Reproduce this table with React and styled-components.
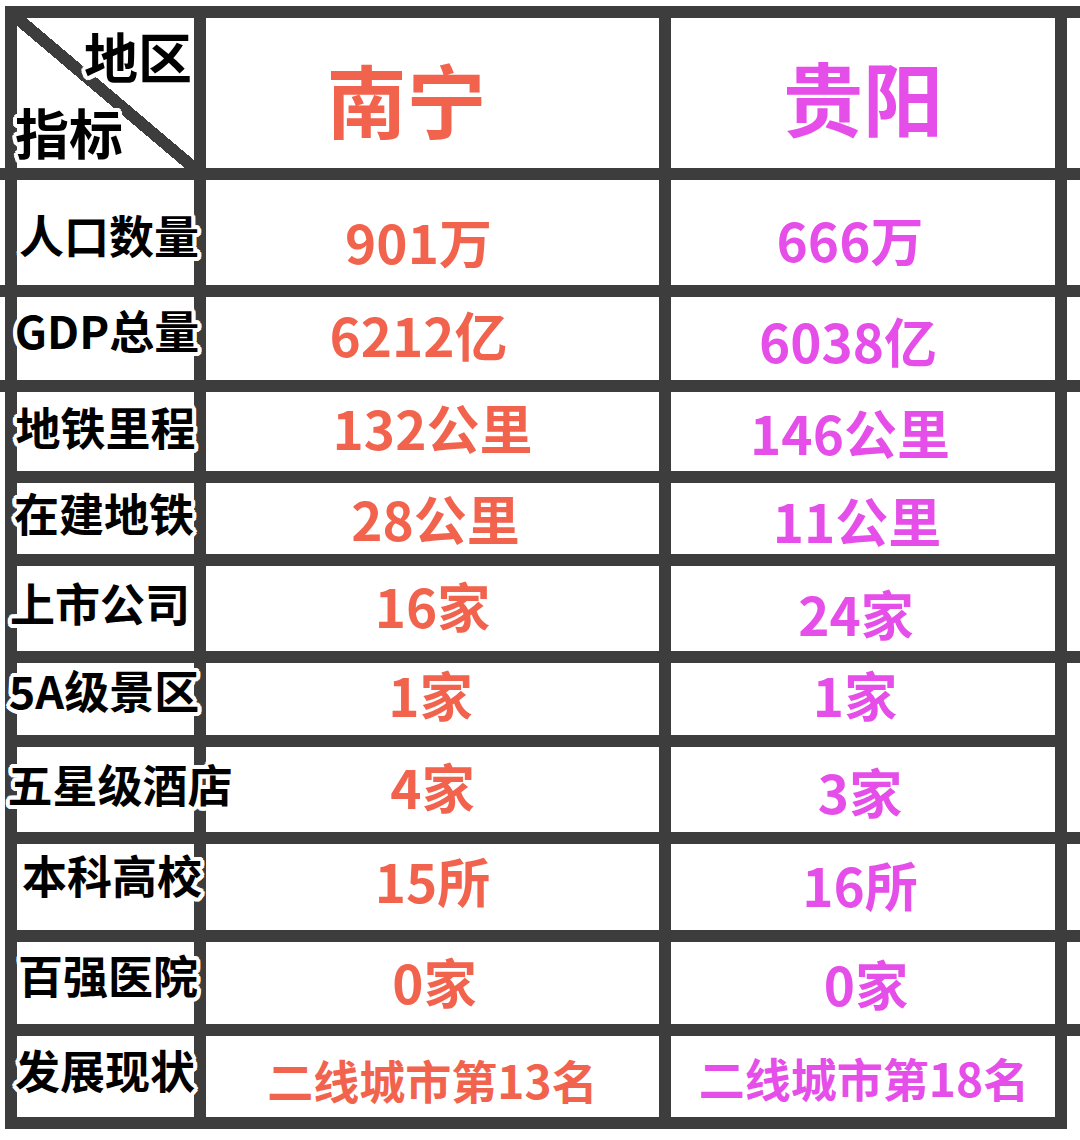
import React from 'react';
import styled, { createGlobalStyle } from 'styled-components';

const LINE = '#3d3d3d';
const CORAL = '#f2634d';
const MAGENTA = '#e64ee9';
const FONT = '"Noto Sans CJK SC", "Noto Sans", sans-serif';

const ROWS = [150, 105, 83, 79, 71, 85, 72, 85, 86, 82, 81];

const halo = (radii) => {
  const parts = [];
  radii.forEach((r) => {
    for (let i = 0; i < 16; i += 1) {
      const a = (i / 16) * Math.PI * 2;
      parts.push(`${(Math.cos(a) * r).toFixed(1)}px ${(Math.sin(a) * r).toFixed(1)}px 0 #fff`);
    }
  });
  return parts.join(', ');
};
const HALO = halo([1.5, 3, 4]);

const pad = (dx = 0, dy = 0) =>
  `${Math.max(0, 2 * dy)}px ${Math.max(0, -2 * dx)}px ${Math.max(0, -2 * dy)}px ${Math.max(0, 2 * dx)}px`;

const Global = createGlobalStyle`
  html, body { margin: 0; padding: 0; background: #fff; overflow: hidden; }
  body { font-family: ${FONT}; }
`;

const Table = styled.div`
  margin-top: 6px;
  width: 1080px;
  display: grid;
  grid-template-columns: 5px 177px 453px 384px 13px;
  grid-template-rows: ${ROWS.map((r) => `${r}px`).join(' ')};
  gap: 12px;
  padding: 12px 0;
  background: ${LINE};
  font-family: ${FONT};
`;

const Filler = styled.div`
  background: #fff;
  grid-column: ${(p) => p.$col};
  grid-row: ${(p) => p.$row};
  margin-top: ${(p) => (p.$pullTop ? '-12px' : '0')};
  margin-bottom: ${(p) => (p.$pullBottom ? '-12px' : '0')};
`;

const Corner = styled.div`
  position: relative;
  z-index: 1;
  display: flex;
  flex-direction: column;
  justify-content: space-between;
  padding: 11px 2px 9px 0;
  background: linear-gradient(
    to top right,
    #fff calc(50% - 6px),
    ${LINE} calc(50% - 6px),
    ${LINE} calc(50% + 6px),
    #fff calc(50% + 6px)
  );
`;

const CornerText = styled.span`
  font-size: 54px;
  line-height: 1;
  font-weight: 700;
  color: #000;
  white-space: nowrap;
  text-shadow: ${HALO};
  align-self: ${(p) => (p.$end ? 'flex-end' : 'flex-start')};
  margin-left: ${(p) => (p.$end ? '0' : '-2px')};
`;

const Label = styled.div`
  position: relative;
  z-index: 2;
  background: #fff;
  display: flex;
  align-items: center;
  justify-content: center;
  padding: ${(p) => pad(p.$dx, p.$dy)};
  font-size: 45px;
  line-height: 1;
  font-weight: 700;
  color: #000;
  white-space: nowrap;
  text-shadow: ${HALO};
`;

const Value = styled.div`
  position: relative;
  z-index: 1;
  background: #fff;
  display: flex;
  align-items: center;
  justify-content: center;
  padding: ${(p) => pad(p.$dx, p.$dy)};
  font-size: ${(p) => p.$size}px;
  line-height: 1;
  font-weight: 700;
  color: ${(p) => p.$color};
  white-space: nowrap;
  text-shadow: ${HALO};
`;

const DATA = [
  { label: '人口数量', l: [3.5, 2], a: '901万', ad: [-14, 9], b: '666万', bd: [-13, 7] },
  { label: 'GDP总量', l: [1.5, -9], a: '6212亿', ad: [-14, -4], b: '6038亿', bd: [-15, 2] },
  { label: '地铁里程', l: [0, -5], a: '132公里', ad: [0, -4], b: '146公里', bd: [-13, 1] },
  { label: '在建地铁', l: [-1.5, -6], a: '28公里', ad: [3, 0], b: '11公里', bd: [-6, 2] },
  { label: '上市公司', l: [-5.5, -6], a: '16家', ad: [0, -3], b: '24家', bd: [-7, 5] },
  { label: '5A级景区', l: [-1.5, -9.5], a: '1家', ad: [-2, -4.5], b: '1家', bd: [-8, -4.5] },
  { label: '五星级酒店', l: [14.5, -6], a: '4家', ad: [0, -3], b: '3家', bd: [-3, 2] },
  { label: '本科高校', l: [6.5, -12.5], a: '15所', ad: [0, -6.5], b: '16所', bd: [-3, -2.5] },
  { label: '百强医院', l: [2.5, -8.5], a: '0家', ad: [2, -1.5], b: '0家', bd: [3, 0] },
  { label: '发展现状', l: [-0.5, -7], a: '二线城市第13名', ad: [0, 2], b: '二线城市第18名', bd: [1, 0], small: true },
];

const LEFT_FILL = [
  { row: '1', top: true },
  { row: '2' },
  { row: '3' },
  { row: '4 / 12', bottom: true },
];

const RIGHT_FILL = [
  { row: '1' },
  { row: '2' },
  { row: '3' },
  { row: '4 / 7' },
  { row: '7 / 9' },
  { row: '9' },
  { row: '10' },
  { row: '11', bottom: true },
];

export default function App() {
  return (
    <>
      <Global />
      <Table>
        {LEFT_FILL.map((f) => (
          <Filler key={`l${f.row}`} $col="1" $row={f.row} $pullTop={f.top} $pullBottom={f.bottom} />
        ))}
        {RIGHT_FILL.map((f) => (
          <Filler key={`r${f.row}`} $col="5" $row={f.row} $pullBottom={f.bottom} />
        ))}
        <Corner>
          <CornerText $end>地区</CornerText>
          <CornerText>指标</CornerText>
        </Corner>
        <Value $size={80} $color={CORAL} $dx={-26} $dy={4}>南宁</Value>
        <Value $size={80} $color={MAGENTA} $dx={0} $dy={2}>贵阳</Value>
        {DATA.map((r) => (
          <React.Fragment key={r.label}>
            <Label $dx={r.l[0]} $dy={r.l[1]}>{r.label}</Label>
            <Value $size={r.small ? 46 : 53} $color={CORAL} $dx={r.ad[0]} $dy={r.ad[1]}>{r.a}</Value>
            <Value $size={r.small ? 46 : 53} $color={MAGENTA} $dx={r.bd[0]} $dy={r.bd[1]}>{r.b}</Value>
          </React.Fragment>
        ))}
      </Table>
    </>
  );
}
